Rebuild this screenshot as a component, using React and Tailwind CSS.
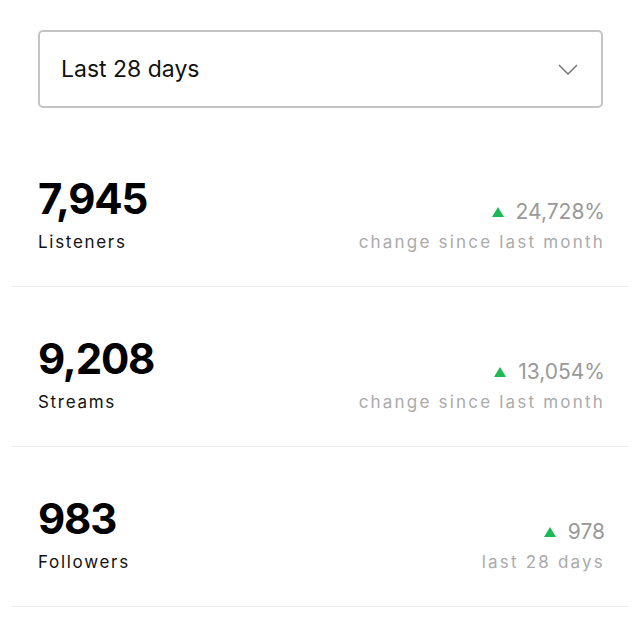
import React from "react";

const stats = [
  { value: "7,945", label: "Listeners", change: "24,728%", note: "change since last month" },
  { value: "9,208", label: "Streams", change: "13,054%", note: "change since last month" },
  { value: "983", label: "Followers", change: "978", note: "last 28 days" },
];

const StatRow = ({ stat }) => (
  <div className="h-[160px] border-b border-[#ececec] pl-[26px] pr-[23px] pt-[50px] flex items-start justify-between">
    <div className="flex flex-col">
      <span className="text-[42px] leading-[44px] font-bold tracking-[-1.2px] text-black">{stat.value}</span>
      <span className="mt-[11px] text-[17px] leading-[20px] tracking-[1.7px] text-[#111]">{stat.label}</span>
    </div>
    <div className="flex flex-col items-end pt-[23px]">
      <div className="flex items-center gap-[12px] h-[24px]">
        <svg width="12" height="10" viewBox="0 0 12 10">
          <polygon points="6,0 12,10 0,10" fill="#1db954" />
        </svg>
        <span className="text-[21px] leading-[24px] text-[#999]">{stat.change}</span>
      </div>
      <span className="mt-[8px] text-[17px] leading-[20px] tracking-[2.2px] text-[#aaa]">{stat.note}</span>
    </div>
  </div>
);

const App = () => {
  return (
    <div className="w-[640px] min-h-[640px] bg-white pt-[30px]" style={{ fontFamily: "Inter, 'Noto Sans', sans-serif" }}>
      <div className="mx-[38px] w-[565px] h-[78px] border-2 border-[#c4c4c4] rounded-[5px] flex items-center justify-between pl-[21px] pr-[23px]">
        <span className="text-[23px] text-[#111]">Last 28 days</span>
        <svg width="20" height="11" viewBox="0 0 20 11" fill="none">
          <polyline points="1,1 10,10 19,1" stroke="#777" strokeWidth="1.5" />
        </svg>
      </div>
      <div className="mx-3 mt-[19px]">
        {stats.map((s) => (
          <StatRow key={s.label} stat={s} />
        ))}
      </div>
    </div>
  );
};

export default App;
